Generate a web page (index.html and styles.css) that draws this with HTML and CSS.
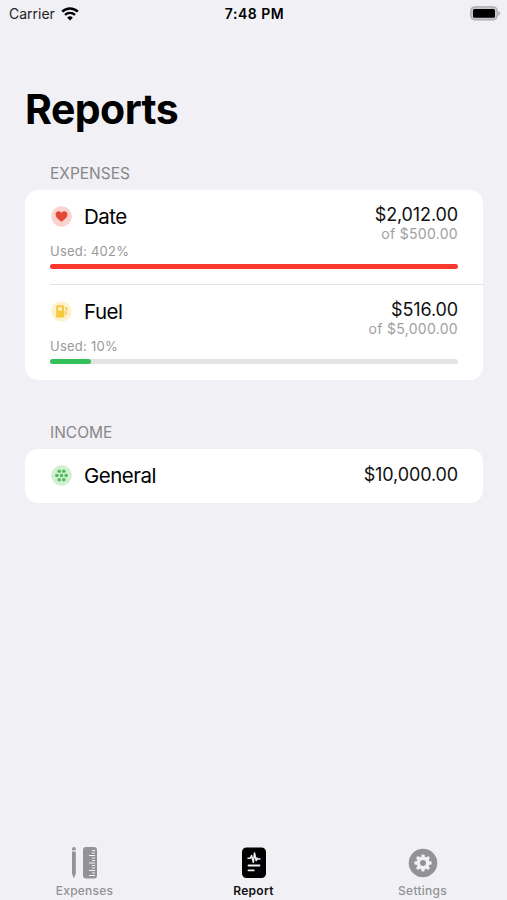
FILE: index.html
```html
<!DOCTYPE html>
<html lang="en">
<head>
  <meta charset="UTF-8" />
  <meta name="viewport" content="width=device-width, initial-scale=1" />
  <title>Reports</title>
  <link rel="stylesheet" href="styles.css">
</head>
<body>

  <header class="status-bar">
    <div class="carrier">
      <span class="carrier-name">Carrier</span>
      <svg class="wifi" width="18" height="14" viewBox="0 0 18 14">
        <path d="M1.2 4.6a11.2 11.2 0 0 1 15.6 0" fill="none" stroke="#000" stroke-width="2.5" />
        <path d="M4 7.9a7.2 7.2 0 0 1 10 0" fill="none" stroke="#000" stroke-width="2.3" />
        <path d="M9 13.6L6.2 10.7a4 4 0 0 1 5.6 0z" />
      </svg>
    </div>
    <span class="time">7:48 PM</span>
    <svg class="battery" width="31" height="15" viewBox="0 0 31 15">
      <rect x="0.8" y="0.8" width="26.4" height="13" rx="4" fill="#c9c9cc" stroke="#aaaaad" stroke-width="1.2" />
      <rect x="3" y="3" width="22" height="8.8" rx="1.5" />
      <path d="M28.4 5v4.8c2.3-.8 2.3-4 0-4.8z" fill="#aaaaad" />
    </svg>
  </header>

  <main class="content">
    <h1>Reports</h1>

    <section>
      <h2>EXPENSES</h2>
      <div class="card">
        <div class="row">
          <div class="row-top">
            <div class="category">
              <svg class="icon" width="21" height="21" viewBox="0 0 21 21">
                <circle cx="10.5" cy="10.5" r="10.3" fill="#fad2cf" />
                <path d="M10.5 15.8C7 13.3 4.6 11.1 4.6 8.5c0-3.500 4.300-4.400 5.900-1.500 1.600-2.900 5.900-2 5.900 1.500 0 2.600-2.400 4.800-5.900 7.300z" fill="#e34a35" />
              </svg>
              <span class="name">Date</span>
            </div>
            <div class="amounts">
              <span class="amount">$2,012.00</span>
              <span class="limit">of $500.00</span>
            </div>
          </div>
          <div class="used">Used: 402%</div>
          <div class="progress"><div class="bar over" style="width: 100%"></div></div>
        </div>

        <div class="row">
          <div class="row-top">
            <div class="category">
              <svg class="icon" width="21" height="21" viewBox="0 0 21 21">
                <circle cx="10.5" cy="10.5" r="10.3" fill="#fdf2cf" />
                <path fill-rule="evenodd" d="M6.300 4.300h5.500q1.200 0 1.200 1.200V15h.4v1.500H5V15h.2V5.500q0-1.200 1.100-1.200zM7.200 6.200v3.200h3.900V6.200z" fill="#f5c83f" />
                <path d="M13.300 10.500h.6v3q.3 1 1.300.2.500-.6.500-1.700V7.400l-1.500-1.600" fill="none" stroke="#f5c83f" stroke-width="0.9" />
                <path d="M14.400 6.400h1.700v2.500h-1.700z" fill="#f5c83f" />
              </svg>
              <span class="name">Fuel</span>
            </div>
            <div class="amounts">
              <span class="amount">$516.00</span>
              <span class="limit">of $5,000.00</span>
            </div>
          </div>
          <div class="used">Used: 10%</div>
          <div class="progress"><div class="bar" style="width: 10.1%"></div></div>
        </div>
      </div>
    </section>

    <section>
      <h2>INCOME</h2>
      <div class="card">
        <div class="row row-short">
          <div class="row-top">
            <div class="category">
              <svg class="icon" width="21" height="21" viewBox="0 0 21 21">
                <circle cx="10.5" cy="10.5" r="10.3" fill="#d0f0d3" />
                <g fill="#52b95b">
                  <circle cx="8.2" cy="6.3" r="1.8" />
                  <circle cx="12.8" cy="6.3" r="1.8" />
                  <circle cx="5.9" cy="10.5" r="1.8" />
                  <circle cx="10.5" cy="10.5" r="1.8" />
                  <circle cx="15.1" cy="10.5" r="1.8" />
                  <circle cx="8.2" cy="14.7" r="1.8" />
                  <circle cx="12.8" cy="14.7" r="1.8" />
                </g>
              </svg>
              <span class="name">General</span>
            </div>
            <div class="amounts">
              <span class="amount">$10,000.00</span>
            </div>
          </div>
        </div>
      </div>
    </section>
  </main>

  <nav class="tab-bar">
    <a class="tab">
      <svg width="28" height="34" viewBox="0 0 28 34">
        <g fill="#929297">
          <path d="M1 3.200Q1 1 2.900 1t1.900 2.200v1H1zM1 5.400h3.800v22L2.900 32.500 1 27.400z" />
          <rect x="12" y="1" width="14" height="31.5" rx="3" />
        </g>
        <path d="M24 4.500h-3M24 7h-3M24 9.500h-6M24 12h-3M24 14.500h-3M24 17h-6M24 19.500h-3M24 22h-3M24 24.500h-6M24 27h-3M24 29.500h-6" stroke="#f0f0f5" stroke-width="1" />
      </svg>
      <span>Expenses</span>
    </a>
    <a class="tab active">
      <svg width="28" height="34" viewBox="0 0 28 34">
        <rect x="2" y="1.5" width="24" height="30.5" rx="4.500" />
        <path d="M8 12.300h2.300l1.300-2.800 1.700 6.800 1.200-9.300 1.700 7.600 1-2.500.8 1h2" fill="none" stroke="#f0f0f5" stroke-width="1.5" stroke-linejoin="round" stroke-linecap="round" />
        <path d="M8.500 19.500h11M8.500 24.400h5.300" stroke="#f0f0f5" stroke-width="1.8" stroke-linecap="round" />
      </svg>
      <span>Report</span>
    </a>
    <a class="tab">
      <svg width="30" height="34" viewBox="-15 -17 30 34">
        <circle r="14.3" fill="#929297" />
        <g fill="#f0f0f5">
          <circle r="6.5" />
          <g id="teeth">
            <rect x="-1.7" y="-8.6" width="3.4" height="17.2" rx="1" />
            <rect x="-8.6" y="-1.7" width="17.2" height="3.4" rx="1" />
          </g>
          <use href="#teeth" transform="rotate(45)" />
        </g>
        <circle r="3" fill="#929297" />
      </svg>
      <span>Settings</span>
    </a>
  </nav>

</body>
</html>
```
FILE: styles.css
```css
* {
  box-sizing: border-box;
}
body {
  font-family: Inter, "Liberation Sans", sans-serif;
  background: #f0f0f5;
  color: #000;
  margin: 0;
  height: 900px;
  display: flex;
  flex-direction: column;
  overflow: hidden;
}

/* status bar */
.status-bar {
  display: grid;
  grid-template-columns: 1fr auto 1fr;
  align-items: center;
  height: 27px;
  padding: 0 6px 0 9px;
  font-size: 14px;
  line-height: 18px;
}
.carrier {
  display: flex;
  align-items: center;
  gap: 6px;
  color: #222;
}
.time {
  font-weight: 600;
  letter-spacing: 0.5px;
  margin-right: 1px;
}
.battery {
  justify-self: end;
}

.content {
  flex: 1;
  padding: 57px 24px 0 25px;
}
h1 {
  margin: 0;
  font-size: 41px;
  line-height: 50px;
  font-weight: 700;
  letter-spacing: -0.55px;
}
h2 {
  margin: 0;
  padding-left: 25px;
  font-size: 15.5px;
  line-height: 20px;
  font-weight: 400;
  color: #87878b;
}
section {
  padding-top: 30px;
}
section + section {
  padding-top: 42.5px;
}

/* grouped list */
.card {
  margin-top: 6px;
  background: #fff;
  border-radius: 13px;
}
.row {
  position: relative;
  height: 95px;
  padding: 14px 25px 0;
}
.row + .row::before {
  content: "";
  position: absolute;
  top: -1px;
  left: 25px;
  right: 0;
  height: 1px;
  background: #e3e3e6;
}
.row-short {
  height: 54px;
  padding-top: 15px;
}
.row-top {
  display: flex;
  justify-content: space-between;
  align-items: flex-start;
}
.category {
  display: flex;
  align-items: center;
  gap: 12px;
  height: 24px;
  padding-left: 1px;
}
.name {
  font-size: 20.5px;
  line-height: 25px;
  letter-spacing: -0.5px;
}
.amounts {
  display: flex;
  flex-direction: column;
  align-items: flex-end;
}
.amount {
  font-size: 18px;
  line-height: 22px;
  letter-spacing: -0.12px;
  color: #111;
}
.limit {
  font-size: 14px;
  line-height: 16px;
  letter-spacing: 0.3px;
  color: #a0a0a2;
}
.used {
  margin-top: 1px;
  font-size: 13px;
  line-height: 16px;
  letter-spacing: 0.25px;
  color: #99999b;
}
.progress {
  margin-top: 5px;
  height: 5px;
  border-radius: 3px;
  background: #e3e3e3;
}
.bar {
  height: 5px;
  border-radius: 3px;
  background: #34c05a;
}
.bar.over {
  background: #fa382e;
}

/* tabs */
.tab-bar {
  display: grid;
  grid-template-columns: repeat(3, 1fr);
  height: 54px;
}
.tab {
  display: flex;
  flex-direction: column;
  align-items: center;
  font-size: 12px;
  font-weight: 500;
  line-height: 16px;
  letter-spacing: 0.25px;
  color: #929297;
}
.tab svg {
  margin-bottom: 3px;
}
.tab.active {
  color: #111;
  font-weight: 600;
}
```
